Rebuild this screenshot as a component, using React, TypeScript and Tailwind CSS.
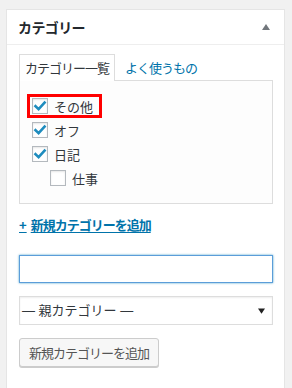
import { useState } from 'react';

const jp = { fontFamily: '"Noto Sans CJK JP", "Liberation Sans", sans-serif' };

type Item = { label: string; checked: boolean; child?: boolean };

const items: Item[] = [
  { label: 'その他', checked: true },
  { label: 'オフ', checked: true },
  { label: '日記', checked: true },
  { label: '仕事', checked: false, child: true },
];

function CheckBox({ checked }: { checked: boolean }) {
  return (
    <span className="relative w-[16px] h-[16px] shrink-0 border border-[#b4b9be] bg-white shadow-[inset_0_1px_2px_rgba(0,0,0,0.1)]">
      {checked && (
        <svg viewBox="0 0 16 16" className="absolute -left-[1px] -top-[1px] w-[16px] h-[16px]">
          <path d="M3.5 8.2 L6.6 11.2 L12.6 4.6" fill="none" stroke="#1e8cbe" strokeWidth="2.6" strokeLinecap="square" />
        </svg>
      )}
    </span>
  );
}

export default function App() {
  const [tab] = useState<'all' | 'pop'>('all');

  return (
    <div className="w-[292px] h-[388px] overflow-hidden bg-[#f1f1f1] pt-[9px] pl-[6px]" style={jp}>
      <div className="w-[279px] h-[400px] bg-white border border-[#e5e5e5]">
        {/* ヘッダー */}
        <div className="h-[35px] border-b border-[#eeeeee] flex items-center justify-between pl-[11px] pr-[14px]">
          <h2 className="text-[14px] font-semibold text-[#23282d] tracking-[-0.6px]">カテゴリー</h2>
          <svg viewBox="0 0 8 6" className="w-[8px] h-[6px] mb-[1px]">
            <path d="M4 0 L8 6 L0 6 Z" fill="#72777c" />
          </svg>
        </div>

        <div className="pt-[9px] pl-[12px] pr-[11px]">
          {/* タブ */}
          <div className="flex items-end h-[27px] text-[13px] tracking-[-1px]">
            <div
              className={`h-[27px] px-[5px] flex items-center border border-b-0 border-[#dddddd] bg-white relative z-10 ${
                tab === 'all' ? 'text-[#32373c]' : 'text-[#0073aa]'
              }`}
            >
              カテゴリー一覧
            </div>
            <div className="h-[27px] pl-[10px] flex items-center text-[#0073aa]">よく使うもの</div>
          </div>

          {/* 一覧 */}
          <div className="relative -mt-px border border-[#dddddd] bg-[#fdfdfd] pt-[13px] pb-[13px] pl-[12px] h-[124px]">
            <ul className="text-[13px] text-[#32373c]">
              {items.map((it) => (
                <li
                  key={it.label}
                  className={`h-[24px] flex items-center gap-[6px] ${it.child ? 'pl-[18px]' : ''}`}
                >
                  <CheckBox checked={it.checked} />
                  <span className="leading-none">{it.label}</span>
                </li>
              ))}
            </ul>
            {/* 注目枠 */}
            <div className="absolute left-[7px] top-[13px] w-[75px] h-[24px] border-[3px] border-[#ff0000]" />
          </div>

          <a
            href="#"
            className="flex gap-[4px] w-fit mt-[12px] text-[13px] font-semibold text-[#0073aa] underline underline-offset-2 leading-[18px]"
          >
            <span>+</span>
            <span className="tracking-[-1px]">新規カテゴリーを追加</span>
          </a>

          <input
            type="text"
            className="block mt-[21px] w-[254px] h-[28px] border border-[#5b9dd9] shadow-[0_0_2px_rgba(30,140,190,0.8)] outline-none bg-white"
          />

          <div className="mt-[13px] w-[254px] h-[29px] border border-[#dddddd] bg-white flex items-center justify-between pl-[2px] pr-[7px] shadow-[inset_0_1px_2px_rgba(0,0,0,0.07)]">
            <span className="text-[13px] text-[#32373c] whitespace-pre font-['Liberation_Sans','Noto_Sans_CJK_JP',sans-serif]">
              — 親カテゴリー —
            </span>
            <svg viewBox="0 0 8 6" className="w-[7px] h-[6px]">
              <path d="M0 0 L8 0 L4 6 Z" fill="#222" />
            </svg>
          </div>

          <button className="mt-[13px] h-[29px] px-[9px] border border-[#cccccc] rounded-[3px] bg-[#f7f7f7] text-[13px] text-[#555555] tracking-[-1px] shadow-[0_1px_0_#cccccc]">
            新規カテゴリーを追加
          </button>
        </div>
      </div>
    </div>
  );
}
